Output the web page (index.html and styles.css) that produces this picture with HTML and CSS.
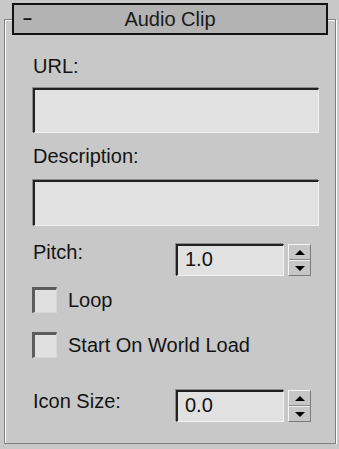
FILE: index.html
```html
<!DOCTYPE html>
<html lang="en">

<head>
  <meta charset="UTF-8">
  <meta name="viewport" content="width=device-width, initial-scale=1.0">
  <title>Audio Clip</title>
  <link rel="stylesheet" href="styles.css">
</head>

<body>
  <fieldset class="rollout">
    <legend class="rollout-title">
      <span class="collapse">&ndash;</span>
      <span class="title">Audio Clip</span>
      <span></span>
    </legend>
    <div class="rollout-body">
      <div class="label">URL:</div>
      <div class="edit wide"></div>

      <div class="label label-desc">Description:</div>
      <div class="edit wide wide-last"></div>

      <div class="row">
        <span class="row-label">Pitch:</span>
        <span class="edit num">1.0</span>
        <span class="spinner"><i class="up"></i><i class="down"></i></span>
      </div>

      <div class="check check-loop">
        <span class="box"></span>
        <span>Loop</span>
      </div>
      <div class="check check-start">
        <span class="box"></span>
        <span>Start On World Load</span>
      </div>

      <div class="row row-icon">
        <span class="row-label">Icon Size:</span>
        <span class="edit num">0.0</span>
        <span class="spinner"><i class="up"></i><i class="down"></i></span>
      </div>
    </div>
  </fieldset>
</body>

</html>
```

FILE: styles.css
```css
* {
  padding: 0;
  margin: 0;
  box-sizing: border-box;
}

body {
  background-color: #c8c8c8;
  font: 20px/20px "Liberation Sans", Arial, sans-serif;
  color: #141414;
}

.rollout {
  width: 331px;
  margin: 3px 0 0 4px;
  padding: 0 7px;
  border: 1px solid #808080;
  box-shadow: 1px 1px 0 #fff, inset 1px 1px 0 #fff;
}

.rollout-title {
  width: 316px;
  height: 32px;
  display: grid;
  grid-template-columns: 1fr auto 1fr;
  align-items: center;
  border: 2px solid #121212;
  background-color: #b3b3b3;
}

.collapse {
  font-size: 16px;
  font-weight: bold;
  padding-left: 9px;
  line-height: 20px;
}

.title {
  color: #1a1a1a;
}

.rollout-body {
  padding: 21px 0 21px 21px;
}

.label {
  height: 20px;
  margin-bottom: 12px;
}

.label-desc {
  margin-bottom: 14px;
}

.edit {
  display: block;
  background-color: #e1e1e1;
  border-style: solid;
  border-width: 2px 1px 1px 2px;
  border-color: #222 #f2f2f2 #f2f2f2 #222;
  box-shadow: -1px -1px 0 #8c8c8c;
}

.wide {
  width: 286px;
  height: 45px;
  margin-bottom: 13px;
}

.wide-last {
  height: 46px;
  margin-bottom: 18px;
}

.row {
  display: flex;
  align-items: flex-start;
}

.row-label {
  width: 143px;
  margin-top: -2px;
}

.row-icon .row-label {
  margin-top: 1px;
}

.num {
  width: 108px;
  height: 32px;
  padding: 3px 0 0 7px;
  color: #101010;
}

.spinner {
  width: 23px;
  height: 32px;
  margin-left: 4px;
  display: flex;
  flex-direction: column;
  border: 1px solid;
  border-color: #f4f4f4 #7a7a7a #7a7a7a #f4f4f4;
  background-color: #c6c6c6;
}

.spinner i {
  flex: 1;
  display: flex;
  align-items: center;
  justify-content: center;
}

.spinner .up {
  border-bottom: 1px solid #8a8a8a;
}

.spinner .down {
  border-top: 1px solid #eee;
}

.spinner .up::after,
.spinner .down::after {
  content: "";
  border-left: 5px solid transparent;
  border-right: 5px solid transparent;
}

.spinner .up::after {
  border-bottom: 5px solid #000;
}

.spinner .down::after {
  border-top: 5px solid #000;
}

.check {
  display: flex;
  align-items: center;
  gap: 11px;
  margin-left: -1px;
}

.check-loop {
  margin-top: 11px;
}

.check-start {
  margin-top: 19px;
  margin-bottom: 32px;
}

.box {
  width: 25px;
  height: 26px;
  background-color: #e0e0e0;
  border-style: solid;
  border-width: 3px 1px 1px 3px;
  border-color: #5c5c5c #d6d6d6 #d6d6d6 #5c5c5c;
}
```
